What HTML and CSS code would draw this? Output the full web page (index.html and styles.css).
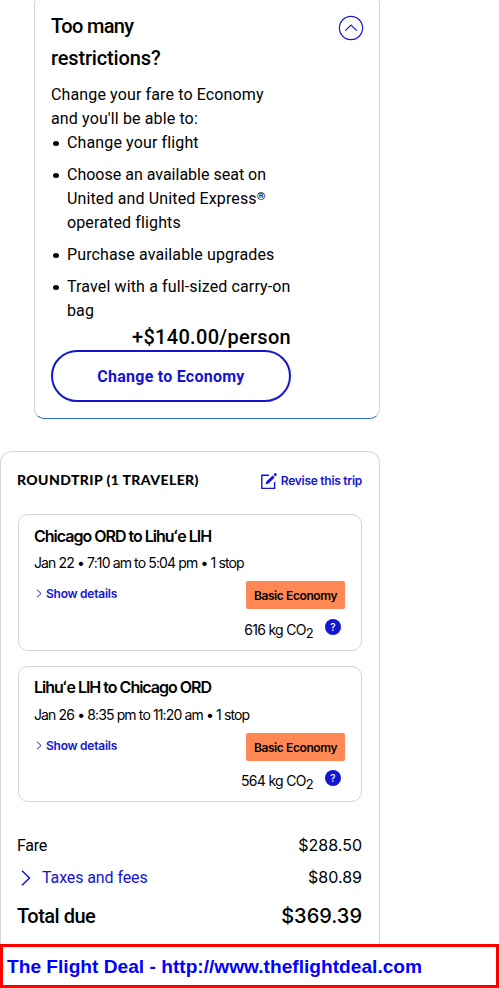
FILE: index.html
```html
<!DOCTYPE html>
<html lang="en">
<head>
    <meta charset="UTF-8">
    <title>Trip summary</title>
    <link rel="stylesheet" href="styles.css">
</head>
<body>
    <section class="upgrade">
        <div class="upgrade-body">
            <h2><span class="title-first">Too many</span><br>restrictions?</h2>
            <p>Change your fare to Economy<br>and you'll be able to:</p>
            <ul>
                <li>Change your flight</li>
                <li><span class="tight">Choose an available seat on</span><br>United and United Express<span class="reg">®</span><br>operated flights</li>
                <li>Purchase available upgrades</li>
                <li>Travel with a full-sized carry-on<br>bag</li>
            </ul>
            <div class="price">+$140.00/person</div>
            <button class="change">Change to Economy</button>
        </div>
        <svg class="collapse" width="26" height="26" viewBox="0 0 26 26">
            <circle cx="13" cy="13" r="11.6"/>
            <path d="M7.3 15.6L13 10l5.7 5.6"/>
        </svg>
    </section>

    <section class="trip">
        <div class="trip-head">
            <h3>ROUNDTRIP (1 TRAVELER)</h3>
            <a class="revise">
                <svg width="17" height="18" viewBox="0 0 17 18">
                    <path class="edit-box" d="M8 3.2H.8v13.2h12.8V10"/>
                    <path class="edit-pen" d="M4.6 12.4l.8-3 6.2-5.8 2 2-6 5.8zM12.4 2.6l1.3-1.3q.6-.6 1.2 0l.7.7q.6.6 0 1.2l-1.3 1.3z"/>
                </svg>
                <span>Revise this trip</span>
            </a>
        </div>

        <div class="leg">
            <h4>Chicago ORD to Lihuʻe LIH</h4>
            <p class="times">Jan 22 • 7:10 am to 5:04 pm • 1 stop</p>
            <div class="leg-row">
                <a class="details">
                    <svg width="6" height="9" viewBox="0 0 6 9"><path d="M1 .7l4 3.8-4 3.8"/></svg>
                    <span>Show details</span>
                </a>
                <span class="badge">Basic Economy</span>
            </div>
            <div class="co2">
                <span class="amount">616 kg CO<sub>2</sub></span>
                <span class="help">?</span>
            </div>
        </div>

        <div class="leg leg-return">
            <h4>Lihuʻe LIH to Chicago ORD</h4>
            <p class="times">Jan 26 • 8:35 pm to 11:20 am • 1 stop</p>
            <div class="leg-row">
                <a class="details">
                    <svg width="6" height="9" viewBox="0 0 6 9"><path d="M1 .7l4 3.8-4 3.8"/></svg>
                    <span>Show details</span>
                </a>
                <span class="badge">Basic Economy</span>
            </div>
            <div class="co2">
                <span class="amount">564 kg CO<sub>2</sub></span>
                <span class="help">?</span>
            </div>
        </div>

        <div class="totals">
            <div class="row"><span class="fare">Fare</span><span class="money">$288.50</span></div>
            <div class="row">
                <a class="taxes">
                    <svg width="10" height="16" viewBox="0 0 10 16"><path d="M1 .8L8.5 8 1 15.2"/></svg>
                    <span>Taxes and fees</span>
                </a>
                <span class="money">$80.89</span>
            </div>
            <div class="row total"><span class="due">Total due</span><span class="money">$369.39</span></div>
        </div>
    </section>

    <footer class="banner">The Flight Deal - http://www.theflightdeal.com</footer>
</body>
</html>
```

FILE: styles.css
```css
* {
    box-sizing: border-box;
}

body {
    margin: 0;
    height: 988px;
    overflow: hidden;
    background: #fff;
    color: #000;
    font-family: Roboto, sans-serif;
    font-size: 16px;
    line-height: 24px;
    display: flex;
    flex-direction: column;
}

h2, h3, h4, p, ul {
    margin: 0;
    padding: 0;
}

svg {
    display: block;
    flex: none;
    fill: none;
    stroke: #1414d2;
}

h2, h4, p, li, .price, .revise, .details, .badge, .amount, .banner {
    white-space: nowrap;
}

.upgrade {
    flex: none;
    width: 346px;
    height: 425px;
    margin: -6px 0 0 34px;
    padding: 16px;
    border: 1px solid #d4d4d4;
    border-bottom-color: #2a6de0;
    border-radius: 10px;
    display: flex;
    justify-content: space-between;
}

.upgrade-body {
    width: 240px;
    letter-spacing: 0.13px;
}

.upgrade h2 {
    font-size: 20px;
    line-height: 32px;
    font-weight: 500;
    letter-spacing: -0.15px;
    margin-top: -1px;
    margin-bottom: 9px;
}

.upgrade h2 .title-first {
    letter-spacing: -0.65px;
}

.upgrade ul {
    list-style: none;
}

.upgrade li {
    position: relative;
    padding-left: 16px;
    margin-bottom: 8px;
}

.upgrade li::before {
    content: "";
    position: absolute;
    left: 2px;
    top: 10px;
    width: 6px;
    height: 5px;
    border-radius: 50%;
    background: #000;
}

.upgrade li:last-child {
    margin-bottom: 0;
}

.upgrade li .tight {
    letter-spacing: 0;
}

.reg {
    font-size: 11px;
    line-height: 10px;
    vertical-align: 4px;
    font-weight: 700;
}

.price {
    font-size: 20px;
    line-height: 29px;
    height: 27px;
    font-weight: 500;
    text-align: right;
    letter-spacing: 0.3px;
}

.change {
    display: block;
    width: 240px;
    height: 52px;
    padding: 0;
    border: 2px solid #1414d2;
    border-radius: 26px;
    background: #fff;
    color: #1414d2;
    font: 700 16px Roboto, sans-serif;
    letter-spacing: 0.25px;
}

.collapse {
    margin: 4px -1px 0 0;
    stroke-width: 1.2;
}

.trip {
    flex: none;
    width: 380px;
    height: 493px;
    margin-top: 32px;
    padding: 16px 17px 0 16px;
    border: 1px solid #d4d4d4;
    border-bottom: 0;
    border-radius: 12px 12px 0 0;
}

.trip-head {
    display: flex;
    justify-content: space-between;
    align-items: center;
    height: 26px;
    margin-bottom: 20px;
}

.trip-head h3 {
    margin-top: -2px;
    font: 900 14px/24px Lato, sans-serif;
    letter-spacing: 0.4px;
    white-space: nowrap;
}

.revise {
    display: flex;
    align-items: center;
    gap: 3px;
    color: #1414d2;
    font: 600 12px/18px Inter, sans-serif;
    letter-spacing: -0.27px;
}

.edit-box {
    stroke-width: 1.4;
}

.edit-pen {
    fill: #1414d2;
    stroke: none;
}

.leg {
    width: 344px;
    height: 137px;
    margin: 0 0 15px 1px;
    padding: 9px 16px 0 15px;
    border: 1px solid #d4d4d4;
    border-radius: 10px;
    font-family: Inter, sans-serif;
}

.leg-return {
    height: 136px;
    padding-top: 8px;
}

.leg h4 {
    font-size: 16px;
    line-height: 24px;
    font-weight: 600;
    letter-spacing: -1px;
}

.times {
    font-size: 14px;
    line-height: 20px;
    margin-top: 5px;
    letter-spacing: -0.87px;
}

.leg-return .times {
    margin-top: 6px;
}

.leg-row {
    display: flex;
    justify-content: space-between;
    margin-top: 8px;
}

.details {
    display: flex;
    align-items: center;
    gap: 4px;
    height: 25px;
    padding-left: 2px;
    color: #1414d2;
    font-size: 12px;
    font-weight: 600;
    letter-spacing: -0.25px;
}

.badge {
    width: 99px;
    height: 28px;
    border-radius: 2px;
    background: #ff8855;
    font-size: 12px;
    line-height: 29px;
    font-weight: 600;
    text-align: center;
    letter-spacing: -0.4px;
}

.co2 {
    display: flex;
    justify-content: flex-end;
    gap: 12px;
    margin-top: 9px;
    padding-right: 4px;
}

.amount {
    font-size: 14px;
    line-height: 24px;
    letter-spacing: -0.7px;
}

.amount sub {
    font-size: 13px;
    line-height: 0;
    vertical-align: -3px;
}

.help {
    width: 16px;
    height: 16px;
    margin-top: 1px;
    border-radius: 50%;
    background: #1414d2;
    color: #fff;
    font-size: 10px;
    line-height: 16px;
    font-weight: 500;
    text-align: center;
}

.leg-return .co2 {
    margin-top: 8px;
}

.totals {
    margin-top: 32px;
}

.row {
    display: flex;
    justify-content: space-between;
    height: 24px;
    margin-bottom: 8px;
}

.money {
    margin-top: -1px;
    font-family: Inter, sans-serif;
}

.fare {
    letter-spacing: -0.3px;
}

.taxes {
    display: flex;
    align-items: center;
    gap: 11px;
    padding-left: 4px;
    color: #1414d2;
    letter-spacing: -0.1px;
}

.taxes svg {
    stroke-width: 1.5;
}

.total {
    font-size: 20px;
    line-height: 37px;
    font-weight: 500;
}

.total .money {
    margin-top: 0;
}

.due {
    letter-spacing: -0.5px;
}

.banner {
    flex: none;
    width: 499px;
    height: 44px;
    padding-left: 4px;
    border: 3px solid #f00;
    background: #fff;
    color: #00f;
    font: 700 19.15px/39px "Liberation Sans", Arial, sans-serif;
}
```
